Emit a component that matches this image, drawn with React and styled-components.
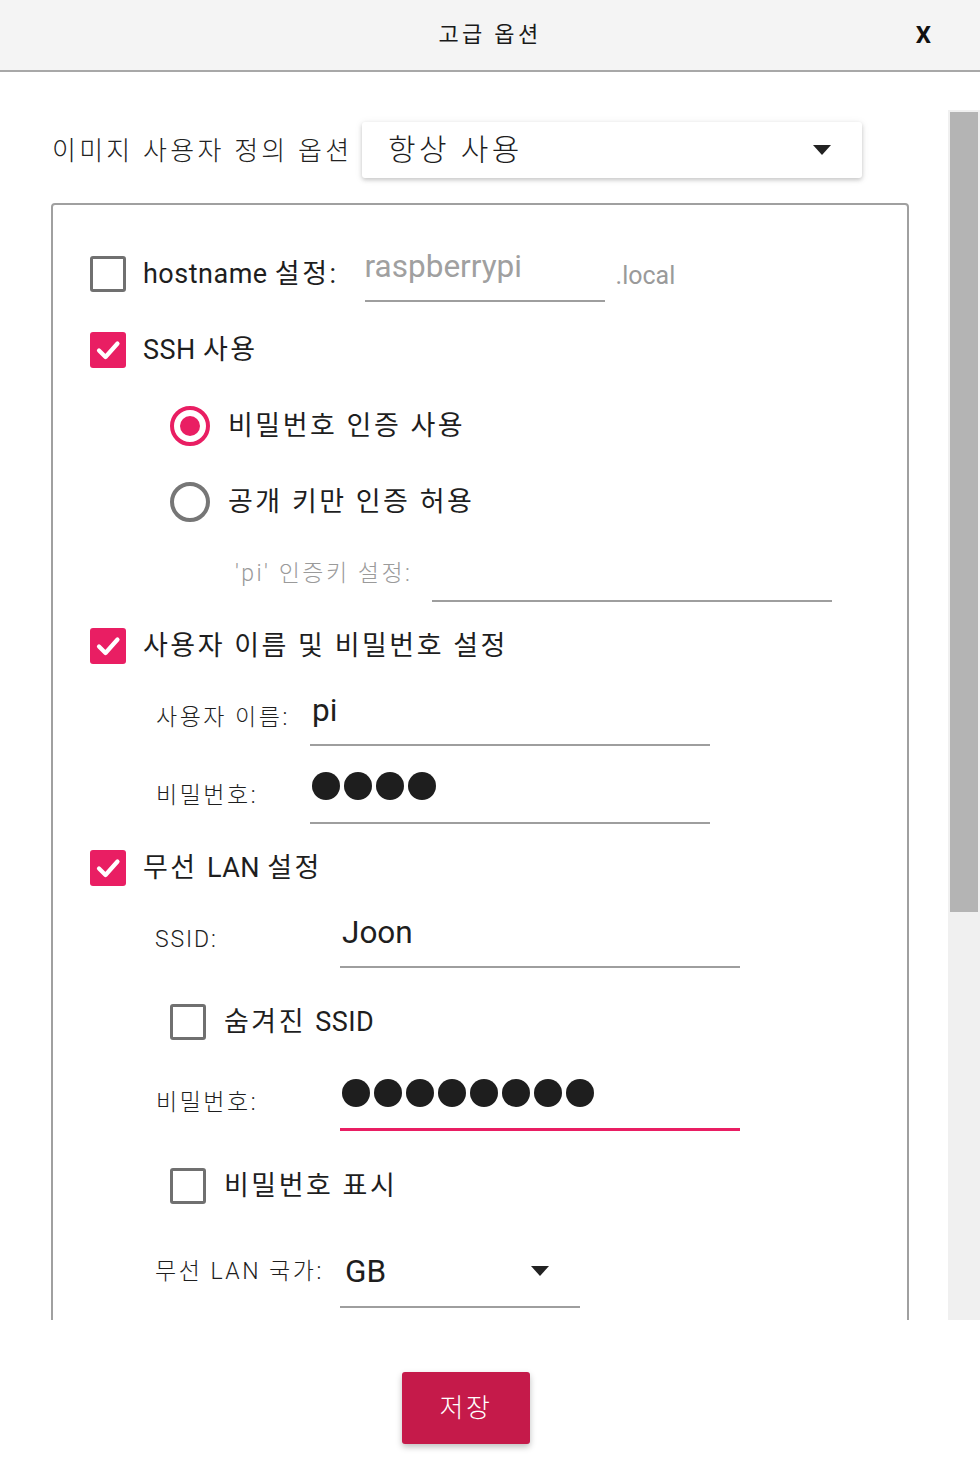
import React from 'react';
import styled, { createGlobalStyle } from 'styled-components';

const GlobalStyle = createGlobalStyle`
  html, body {
    margin: 0;
    padding: 0;
    background: #ffffff;
  }
  body {
    font-family: 'Roboto', 'Noto Sans CJK KR', sans-serif;
    color: #1e1e1e;
  }
`;

const PINK = '#e91e63';
const GRAY_LINE = '#9e9e9e';

// Window frame
const Window = styled.div`
  width: 980px;
  height: 1474px;
  display: flex;
  flex-direction: column;
  background: #ffffff;
  overflow: hidden;
`;

const Header = styled.header`
  height: 70px;
  flex-shrink: 0;
  display: grid;
  grid-template-columns: 1fr auto 1fr;
  align-items: center;
  background: #f4f4f4;
  border-bottom: 2px solid #a8a8a8;
`;

const Title = styled.h1`
  grid-column: 2;
  margin: 0 0 6px;
  font-size: 22px;
  font-weight: 400;
  letter-spacing: 3.3px;
  color: #1a1a1a;
`;

const Close = styled.button`
  grid-column: 3;
  justify-self: end;
  margin-right: 49px;
  padding: 0;
  border: none;
  background: none;
  font-family: 'Roboto', sans-serif;
  font-size: 24px;
  font-weight: 700;
  color: #111;
`;

const Body = styled.div`
  height: 1248px;
  flex-shrink: 0;
  display: flex;
`;

const ScrollView = styled.div`
  flex: 1;
  overflow: hidden;
`;

const Content = styled.div`
  padding: 50px 0 0 51px;
`;

const Scrollbar = styled.div`
  width: 32px;
  margin-top: 38px;
  padding: 2px;
  box-sizing: border-box;
  background: #f0f0f0;
`;

const Thumb = styled.div`
  height: 800px;
  background: #b4b4b4;
`;

// Top option select
const TopRow = styled.div`
  display: flex;
  align-items: center;
`;

const TopLabel = styled.span`
  width: 310px;
  padding: 0 0 3px 1px;
  font-size: 26px;
  font-weight: 300;
  letter-spacing: 3.25px;
  color: #222;
  white-space: nowrap;
`;

const TopSelect = styled.div`
  width: 500px;
  height: 56px;
  box-sizing: border-box;
  display: flex;
  align-items: center;
  justify-content: space-between;
  padding: 0 31px 0 26px;
  background: #fff;
  border-radius: 3px;
  box-shadow:
    0 2px 4px rgba(0, 0, 0, 0.18),
    0 1px 8px rgba(0, 0, 0, 0.08);
  font-size: 30px;
  font-weight: 300;
  letter-spacing: 3.4px;
  color: #1e1e1e;

  span {
    margin-bottom: 6px;
  }
`;

// Group box
const Group = styled.div`
  width: 858px;
  height: 1300px;
  margin-top: 25px;
  box-sizing: border-box;
  padding: 41px 0 0 37px;
  border: 2px solid #a0a0a0;
  border-radius: 4px;
`;

const Row = styled.div`
  display: flex;
  align-items: center;
  margin-top: ${(p) => p.$mt || 0}px;
  padding-left: ${(p) => p.$indent || 0}px;
`;

const BoxOuter = styled.span`
  width: 36px;
  height: 36px;
  box-sizing: border-box;
  flex-shrink: 0;
  display: flex;
  align-items: center;
  justify-content: center;
  border-radius: 3px;
  background: ${(p) => (p.$checked ? PINK : '#fff')};
  border: ${(p) => (p.$checked ? 'none' : '3px solid #707070')};
`;

const RadioOuter = styled.span`
  width: 40px;
  height: 40px;
  box-sizing: border-box;
  flex-shrink: 0;
  display: flex;
  align-items: center;
  justify-content: center;
  border-radius: 50%;
  border: 4px solid ${(p) => (p.$checked ? PINK : '#767676')};
`;

const RadioDot = styled.span`
  width: 20px;
  height: 20px;
  border-radius: 50%;
  background: ${PINK};
`;

const OptionText = styled.span`
  margin-left: ${(p) => p.$gap || 17}px;
  font-size: 27px;
  line-height: 32px;
  letter-spacing: 2.5px;
  color: #1e1e1e;
  white-space: nowrap;
`;

// Latin runs are tracked tighter than the Hangul around them
const Latin = styled.span`
  letter-spacing: ${(p) => p.$ls}px;
`;

const FieldLabel = styled.span`
  width: ${(p) => p.$w}px;
  flex-shrink: 0;
  font-size: 23px;
  font-weight: 300;
  line-height: 28px;
  letter-spacing: 2.5px;
  color: ${(p) => (p.$muted ? '#9a9a9a' : '#1e1e1e')};
  white-space: nowrap;
`;

const Field = styled.div`
  width: ${(p) => p.$w}px;
  height: ${(p) => p.$h || 56}px;
  margin-left: ${(p) => p.$ml || 0}px;
  box-sizing: border-box;
  flex-shrink: 0;
  display: flex;
  align-items: center;
  justify-content: space-between;
  padding: 0 ${(p) => p.$pr || 0}px ${(p) => (p.$h ? 0 : 14)}px ${(p) => p.$pl ?? 2}px;
  border-bottom: ${(p) => (p.$focus ? `3px solid ${PINK}` : `2px solid ${GRAY_LINE}`)};
  font-size: 31.5px;
  color: ${(p) => (p.$placeholder ? '#a0a0a0' : '#1e1e1e')};
`;

const Suffix = styled.span`
  margin-left: 11px;
  margin-top: 2px;
  font-size: 25px;
  color: #9a9a9a;
`;

const Dots = styled.span`
  display: flex;
  gap: 4px;
  margin-bottom: 4px;
`;

const Dot = styled.span`
  width: 28px;
  height: 28px;
  border-radius: 50%;
  background: #1e1e1e;
`;

// Footer
const Footer = styled.div`
  flex: 1;
  display: flex;
  justify-content: center;
  align-items: flex-start;
  padding: 52px 48px 0 0;
`;

const SaveButton = styled.button`
  width: 128px;
  height: 72px;
  padding: 0 0 5px;
  border: none;
  border-radius: 3px;
  background: #c51a4a;
  color: #fff;
  font-family: 'Roboto', 'Noto Sans CJK KR', sans-serif;
  font-size: 26px;
  font-weight: 300;
  letter-spacing: 2.5px;
  box-shadow: 0 3px 6px rgba(0, 0, 0, 0.25);
`;

const Arrow = () => (
  <svg width="18" height="10" viewBox="0 0 18 10">
    <path d="M0 0H18L9 10Z" fill="#222" />
  </svg>
);

const Checkbox = ({ checked }) => (
  <BoxOuter $checked={checked}>
    {checked && (
      <svg width="28" height="28" viewBox="0 0 28 28">
        <path
          d="M5 14.5L11.5 21L23.5 7.5"
          fill="none"
          stroke="#fff"
          strokeWidth="4.2"
          strokeLinecap="round"
          strokeLinejoin="round"
        />
      </svg>
    )}
  </BoxOuter>
);

const Radio = ({ checked }) => (
  <RadioOuter $checked={checked}>{checked && <RadioDot />}</RadioOuter>
);

const Password = ({ count }) => (
  <Dots>
    {Array.from({ length: count }).map((_, i) => (
      <Dot key={i} />
    ))}
  </Dots>
);

const App = () => {
  return (
    <>
      <GlobalStyle />
      <Window>
        <Header>
          <Title>고급 옵션</Title>
          <Close>X</Close>
        </Header>
        <Body>
          <ScrollView>
            <Content>
              <TopRow>
                <TopLabel>이미지 사용자 정의 옵션</TopLabel>
                <TopSelect>
                  <span>항상 사용</span>
                  <Arrow />
                </TopSelect>
              </TopRow>

              <Group>
                <Row>
                  <Checkbox />
                  <OptionText>
                    <Latin $ls={0.5}>hostname </Latin>설정:
                  </OptionText>
                  <Field $w={240} $ml={26} $pl={0} $placeholder>
                    raspberrypi
                  </Field>
                  <Suffix>.local</Suffix>
                </Row>

                <Row $mt={30}>
                  <Checkbox checked />
                  <OptionText>
                    <Latin $ls={0.5}>SSH </Latin>사용
                  </OptionText>
                </Row>

                <Row $mt={38} $indent={80}>
                  <Radio checked />
                  <OptionText $gap={18}>비밀번호 인증 사용</OptionText>
                </Row>

                <Row $mt={36} $indent={80}>
                  <Radio />
                  <OptionText $gap={18}>공개 키만 인증 허용</OptionText>
                </Row>

                <Row $mt={24} $indent={145}>
                  <FieldLabel $w={197} $muted>
                    'pi' 인증키 설정:
                  </FieldLabel>
                  <Field $w={400} />
                </Row>

                <Row $mt={26}>
                  <Checkbox checked />
                  <OptionText>사용자 이름 및 비밀번호 설정</OptionText>
                </Row>

                <Row $mt={26} $indent={66}>
                  <FieldLabel $w={154}>사용자 이름:</FieldLabel>
                  <Field $w={400}>pi</Field>
                </Row>

                <Row $mt={22} $indent={66}>
                  <FieldLabel $w={154}>비밀번호:</FieldLabel>
                  <Field $w={400}>
                    <Password count={4} />
                  </Field>
                </Row>

                <Row $mt={26}>
                  <Checkbox checked />
                  <OptionText>
                    무선 <Latin $ls={0.5}>LAN </Latin>설정
                  </OptionText>
                </Row>

                <Row $mt={26} $indent={65}>
                  <FieldLabel $w={185}>
                    <Latin $ls={1.9}>SSID:</Latin>
                  </FieldLabel>
                  <Field $w={400}>Joon</Field>
                </Row>

                <Row $mt={36} $indent={80}>
                  <Checkbox />
                  <OptionText $gap={18}>
                    숨겨진 <Latin $ls={0.5}>SSID</Latin>
                  </OptionText>
                </Row>

                <Row $mt={35} $indent={66}>
                  <FieldLabel $w={184}>비밀번호:</FieldLabel>
                  <Field $w={400} $focus>
                    <Password count={8} />
                  </Field>
                </Row>

                <Row $mt={37} $indent={80}>
                  <Checkbox />
                  <OptionText $gap={18}>비밀번호 표시</OptionText>
                </Row>

                <Row $mt={32} $indent={65}>
                  <FieldLabel $w={185}>무선 LAN 국가:</FieldLabel>
                  <Field $w={240} $h={72} $pl={5} $pr={31}>
                    <span>GB</span>
                    <Arrow />
                  </Field>
                </Row>
              </Group>
            </Content>
          </ScrollView>
          <Scrollbar>
            <Thumb />
          </Scrollbar>
        </Body>
        <Footer>
          <SaveButton>저장</SaveButton>
        </Footer>
      </Window>
    </>
  );
};

export default App;
